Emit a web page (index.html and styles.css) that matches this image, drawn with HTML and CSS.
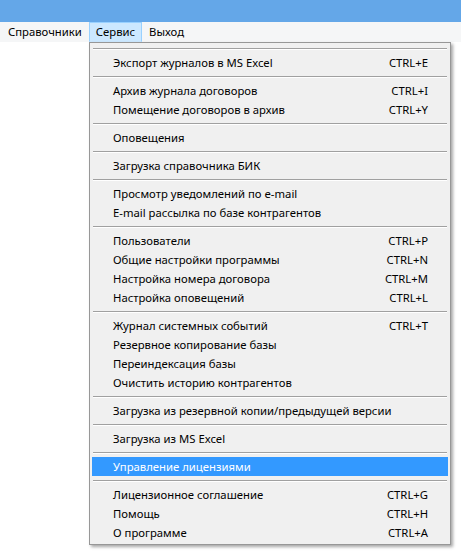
FILE: index.html
```html
<!DOCTYPE html>
<html lang="ru">
<head>
<meta charset="utf-8">
<title>Сервис</title>
<link rel="stylesheet" href="styles.css">
</head>
<body>
<div class="titlebar"></div>
<div class="menubar">
  <span class="mb-item">Справочники</span>
  <span class="mb-item active">Сервис</span>
  <span class="mb-item">Выход</span>
</div>
<div class="dropdown">
  <div class="sep"></div>
  <div class="item"><span>Экспорт журналов в MS Excel</span><span class="key">CTRL+E</span></div>
  <div class="sep"></div>
  <div class="item"><span>Архив журнала договоров</span><span class="key">CTRL+I</span></div>
  <div class="item"><span>Помещение договоров в архив</span><span class="key">CTRL+Y</span></div>
  <div class="sep"></div>
  <div class="item"><span>Оповещения</span></div>
  <div class="sep"></div>
  <div class="item"><span>Загрузка справочника БИК</span></div>
  <div class="sep"></div>
  <div class="item"><span>Просмотр уведомлений по e-mail</span></div>
  <div class="item"><span>E-mail рассылка по базе контрагентов</span></div>
  <div class="sep"></div>
  <div class="item"><span>Пользователи</span><span class="key">CTRL+P</span></div>
  <div class="item"><span>Общие настройки программы</span><span class="key">CTRL+N</span></div>
  <div class="item"><span>Настройка номера договора</span><span class="key">CTRL+M</span></div>
  <div class="item"><span>Настройка оповещений</span><span class="key">CTRL+L</span></div>
  <div class="sep"></div>
  <div class="item"><span>Журнал системных событий</span><span class="key">CTRL+T</span></div>
  <div class="item"><span>Резервное копирование базы</span></div>
  <div class="item"><span>Переиндексация базы</span></div>
  <div class="item"><span>Очистить историю контрагентов</span></div>
  <div class="sep"></div>
  <div class="item"><span>Загрузка из резервной копии/предыдущей версии</span></div>
  <div class="sep"></div>
  <div class="item"><span>Загрузка из MS Excel</span></div>
  <div class="sep"></div>
  <div class="item selected"><span>Управление лицензиями</span></div>
  <div class="sep"></div>
  <div class="item"><span>Лицензионное соглашение</span><span class="key">CTRL+G</span></div>
  <div class="item"><span>Помощь</span><span class="key">CTRL+H</span></div>
  <div class="item"><span>О программе</span><span class="key">CTRL+A</span></div>
</div>
</body>
</html>
```

FILE: styles.css
```css
html, body {
  margin: 0;
  padding: 0;
  background: #ffffff;
}

body {
  font-family: "Noto Sans", "Open Sans", sans-serif;
  font-size: 11.3px;
  color: #000;
  position: relative;
  width: 461px;
  height: 555px;
  overflow: hidden;
}

.titlebar {
  height: 22px;
  background: #64a7e8;
}

.menubar {
  height: 20px;
  background: #f5f6f7;
  display: flex;
  padding-left: 1px;
  box-sizing: border-box;
}

.mb-item {
  border: 1px solid transparent;
  padding: 0 6px;
  line-height: 18px;
  height: 18px;
}

.mb-item.active {
  background: #cce8ff;
  border-color: #99d1ff;
  border-bottom-color: #cce8ff;
}

.dropdown {
  position: absolute;
  left: 89px;
  top: 42px;
  width: 362px;
  box-sizing: border-box;
  background: #f0f0f0;
  border: 1px solid #979797;
  padding: 1px 2px 2px 2px;
  box-shadow: 2px 2px 3px rgba(0, 0, 0, 0.35);
}

.item {
  display: flex;
  justify-content: space-between;
  height: 19px;
  line-height: 19px;
  padding: 0 20px 0 21px;
  white-space: nowrap;
}

.item.selected {
  background: #3399ff;
  color: #ffffff;
}

.sep {
  height: 9px;
  box-sizing: border-box;
  padding: 4px 1px 0 1px;
}

.sep::before {
  content: "";
  display: block;
  height: 1px;
  background: #a0a0a0;
  border-bottom: 1px solid #ffffff;
}
```
